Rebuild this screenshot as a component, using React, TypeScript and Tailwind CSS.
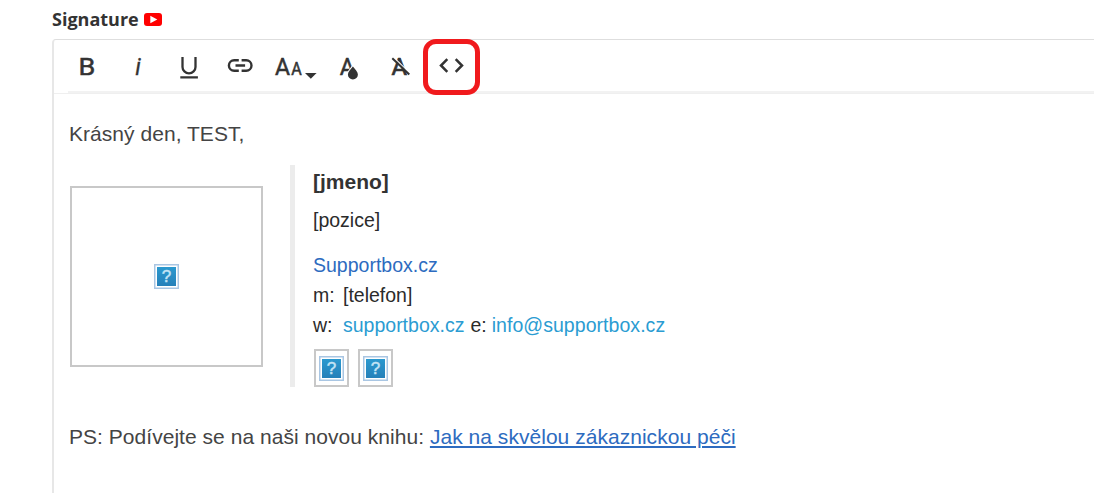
import type { ReactNode } from "react";

function ToolButton({ label, width = "w-[51px]", children }: { label: string; width?: string; children: ReactNode }) {
  return (
    <button type="button" aria-label={label} className={`relative flex h-full shrink-0 items-center justify-center ${width}`}>
      {children}
    </button>
  );
}

const glyph = { fill: "#333", fontFamily: "Roboto, sans-serif" };

// placeholder for a picture that has not loaded
function MissingImage() {
  return (
    <svg className="size-[25px] shrink-0" viewBox="0 0 25 25">
      <defs>
        <linearGradient id="missing" x1="0" y1="0" x2="0" y2="1">
          <stop offset="0" stopColor="#2b99cf" />
          <stop offset="1" stopColor="#2580b9" />
        </linearGradient>
      </defs>
      <rect x="0.75" y="0.75" width="23.5" height="23.5" fill="#fff" stroke="#a9c6e3" strokeWidth="1.5" />
      <rect x="3" y="3" width="19" height="19" fill="url(#missing)" />
      <text x="12.5" y="18" textAnchor="middle" fontSize="17" fill="#c3e3f5" stroke="#c3e3f5" strokeWidth="0.5" fontFamily="'Liberation Sans', sans-serif">
        ?
      </text>
    </svg>
  );
}

export default function App() {
  return (
    <main className="h-[493px] w-[1094px] overflow-hidden bg-white pl-[52px] font-['Liberation_Sans',Arial,sans-serif]">
      <div className="flex h-[39px] items-center gap-[4px]">
        <label className="font-['Open_Sans',sans-serif] text-[18px] font-bold text-[#333]">Signature</label>
        <svg className="ml-px h-[13px] w-[18px]" viewBox="0 0 18 13">
          <rect width="18" height="13" rx="3" fill="#f00" />
          <path d="M6.3 2.7v7.6l7-3.8z" fill="#fff" />
        </svg>
      </div>

      <section className="h-[460px] w-[1060px] rounded-tl-[4px] border-t border-l-2 border-[#e7e7e7] border-t-[#dedede]">
        <div className="flex h-[54px] flex-col border-b border-[#efefef]">
          <div className="flex h-[51px] pl-[7px]">
            <ToolButton label="Bold">
              <svg className="h-[31px] w-[30px]" viewBox="0 0 30 31">
                <text x="6.4" y="24.5" fontSize="24" textLength="16.8" lengthAdjust="spacingAndGlyphs" stroke="#333" strokeWidth="0.5" {...glyph}>B</text>
              </svg>
            </ToolButton>
            <ToolButton label="Italic">
              <svg className="h-[31px] w-[30px]" viewBox="0 0 30 31">
                <text x="15" y="24.5" textAnchor="middle" fontSize="23.5" fontStyle="italic" stroke="#333" strokeWidth="0.3" {...glyph}>i</text>
              </svg>
            </ToolButton>
            <ToolButton label="Underline">
              <svg className="h-[31px] w-[30px]" viewBox="0 0 30 31">
                <path d="M8.5 7v9.9a6.5 6.4 0 0 0 13 0V7M6.3 27.3h17.6" fill="none" stroke="#333" strokeWidth="2.3" />
              </svg>
            </ToolButton>
            <ToolButton label="Link">
              <svg className="h-[31px] w-[30px]" viewBox="0 0 30 31">
                <path d="M13.8 10.2H9.2a5.3 5.3 0 0 0 0 10.6h4.6M16.6 10.2h4.6a5.3 5.3 0 0 1 0 10.6h-4.6M10.5 15.5h9.6" fill="none" stroke="#333" strokeWidth="2.4" />
              </svg>
            </ToolButton>
            <ToolButton label="Font size" width="w-[59px]">
              <svg className="h-[31px] w-[44px]" viewBox="0 0 44 31">
                <text x="2" y="24.5" fontSize="24" stroke="#333" strokeWidth="0.5" textLength="15" lengthAdjust="spacingAndGlyphs" {...glyph}>A</text>
                <text x="18.3" y="24.5" fontSize="17.5" stroke="#333" strokeWidth="0.5" textLength="10.5" lengthAdjust="spacingAndGlyphs" {...glyph}>A</text>
                <path d="M32 23h11.6l-5.8 5.8z" fill="#333" />
              </svg>
            </ToolButton>
            <ToolButton label="Text colour">
              <svg className="h-[31px] w-[30px]" viewBox="0 0 30 31">
                <text x="4.7" y="24.5" fontSize="24" stroke="#333" strokeWidth="0.5" textLength="15" lengthAdjust="spacingAndGlyphs" {...glyph}>A</text>
                <path d="M17.9 16.5c2.1 2.6 5 5.3 5 8.1a5 4.9 0 0 1-10 0c0-2.8 2.9-5.5 5-8.1z" fill="#333" stroke="#fff" strokeWidth="2" paintOrder="stroke" />
              </svg>
            </ToolButton>
            <ToolButton label="Clear formatting">
              <svg className="h-[31px] w-[30px]" viewBox="0 0 30 31">
                <text x="5.6" y="24.5" fontSize="24" stroke="#333" strokeWidth="0.7" textLength="15.5" lengthAdjust="spacingAndGlyphs" {...glyph}>A</text>
                <path d="M7.3 7l16.5 16.2" stroke="#fff" strokeWidth="1.1" />
                <path d="M6.3 8.2l17 16.3" stroke="#333" strokeWidth="2" />
              </svg>
            </ToolButton>
            <ToolButton label="Source code">
              <svg className="h-[31px] w-[30px]" viewBox="0 0 30 31">
                <path d="M10.3 9.2L4 15.5l6.3 6.3M18.7 9.2l6.3 6.3-6.3 6.3" fill="none" stroke="#333" strokeWidth="2.5" />
              </svg>
              <span className="absolute -top-px left-[-3px] h-[56px] w-[57px] rounded-[13px] border-5 border-[#f01a1d]" />
            </ToolButton>
          </div>
          <div className="ml-[14px] h-[2px] bg-[#f2f2f2]" />
        </div>

        <div className="px-[15px] pt-[26px] text-[21px] leading-[28px] text-[#444]">
          <p className="tracking-[0.04px]">Krásný den, TEST,</p>

          <div className="mt-[17px] flex h-[222px]">
            <div className="ml-px mt-[21px] flex h-[181px] w-[193px] items-center justify-center border-2 border-[#c8c8c8]">
              <MissingImage />
            </div>
            <div className="ml-[27px] w-[5px] bg-[#ececec]" />
            <div className="ml-[18px] text-[19.5px] leading-[30px] text-[#2b2b2b]">
              <p className="pt-[2px] text-[21px] font-bold leading-[30px] text-[#333]">[jmeno]</p>
              <p className="mt-[8px]">[pozice]</p>
              <p className="mt-[15px] text-[#2d6bc0]">Supportbox.cz</p>
              <p className="flex"><span className="w-[30px]">m:</span>[telefon]</p>
              <p className="flex">
                <span className="w-[30px]">w:</span>
                <a className="mr-[6px] text-[#2b9cd2]">supportbox.cz</a>
                e:
                <a className="ml-[5px] tracking-[0.05px] text-[#2b9cd2]">info@supportbox.cz</a>
              </p>
              <div className="ml-px mt-[9px] flex gap-[9px]">
                <div className="flex h-[38px] w-[35px] items-center justify-center border-2 border-[#c8c8c8]">
                  <MissingImage />
                </div>
                <div className="flex h-[38px] w-[35px] items-center justify-center border-2 border-[#c8c8c8]">
                  <MissingImage />
                </div>
              </div>
            </div>
          </div>

          <p className="mt-[36px] whitespace-nowrap tracking-[0.035px]">
            PS: Podívejte se na naši novou knihu:{" "}
            <a className="text-[#2d6bc0] underline decoration-[1.5px] underline-offset-[2px]">Jak na skvělou zákaznickou péči</a>
          </p>
        </div>
      </section>
    </main>
  );
}
